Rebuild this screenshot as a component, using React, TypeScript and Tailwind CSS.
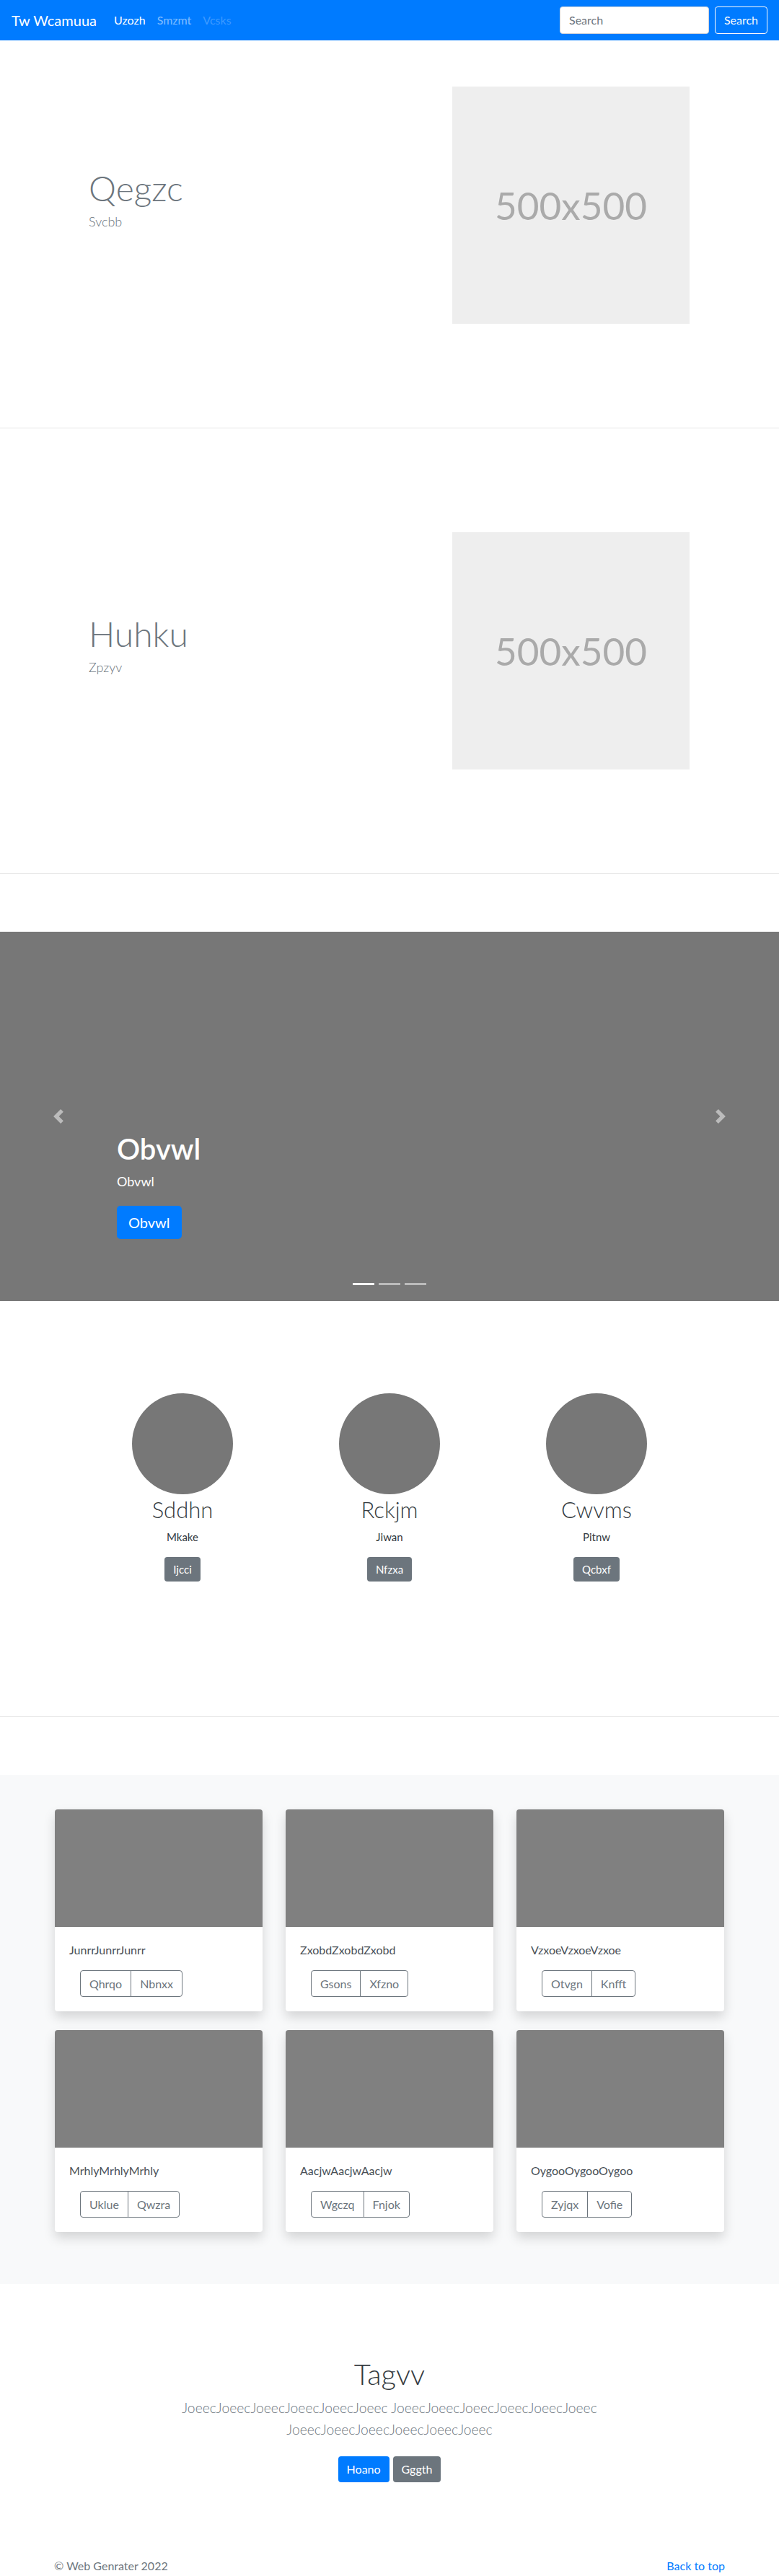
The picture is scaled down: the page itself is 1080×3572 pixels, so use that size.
import React from "react";

const feature = [
  { title: "Qegzc", sub: "Svcbb" },
  { title: "Huhku", sub: "Zpzyv" },
];

const people = [
  { name: "Sddhn", role: "Mkake", btn: "Ijcci" },
  { name: "Rckjm", role: "Jiwan", btn: "Nfzxa" },
  { name: "Cwvms", role: "Pitnw", btn: "Qcbxf" },
];

const cards = [
  { text: "JunrrJunrrJunrr", a: "Qhrqo", b: "Nbnxx" },
  { text: "ZxobdZxobdZxobd", a: "Gsons", b: "Xfzno" },
  { text: "VzxoeVzxoeVzxoe", a: "Otvgn", b: "Knfft" },
  { text: "MrhlyMrhlyMrhly", a: "Uklue", b: "Qwzra" },
  { text: "AacjwAacjwAacjw", a: "Wgczq", b: "Fnjok" },
  { text: "OygooOygooOygoo", a: "Zyjqx", b: "Vofie" },
];

function Feature({ title, sub, top }: { title: string; sub: string; top: boolean }) {
  return (
    <>
      <section className={top ? "pt-16 pb-36" : "pt-36 pb-36"}>
        <div className="mx-auto flex w-[930px]">
          <div className="w-[480px] pl-[48px] pt-[112px]">
            <h1 className="text-[48px] font-light leading-[1.2] text-[#6c757d]">{title}</h1>
            <p className="mt-1 text-[18px] font-light leading-[27px] text-[#6c757d]">{sub}</p>
          </div>
          <div className="pl-[72px]">
            <div className="flex h-[329px] w-[329px] items-center justify-center bg-[#eeeeee] text-[53px] text-[#aaaaaa]">
              500x500
            </div>
          </div>
        </div>
      </section>
      <hr className="border-0 border-t border-[#e5e5e5]" />
    </>
  );
}

export default function App() {
  return (
    <div className="min-h-screen bg-white font-['Lato','Liberation_Sans',sans-serif] text-[16px] text-[#212529]">
      {/* Navbar */}
      <nav className="flex h-14 items-center bg-[#007bff] px-4">
        <a className="mr-4 text-[20px] leading-[30px] text-white">Tw Wcamuua</a>
        <ul className="flex">
          <li className="px-2 text-white">Uzozh</li>
          <li className="px-2 text-white/50">Smzmt</li>
          <li className="px-2 text-white/25">Vcsks</li>
        </ul>
        <div className="ml-auto flex gap-2">
          <div className="flex h-[38px] w-[207px] items-center rounded border border-[#ced4da] bg-white px-3 text-[#6c757d]">
            Search
          </div>
          <button className="h-[38px] w-[73px] rounded border border-[#f8f9fa] text-[#f8f9fa]">Search</button>
        </div>
      </nav>

      <Feature title={feature[0].title} sub={feature[0].sub} top={true} />
      <Feature title={feature[1].title} sub={feature[1].sub} top={false} />

      {/* Carousel */}
      <div className="relative mt-20 flex h-[512px] flex-col justify-end bg-[#777777] pb-[86px] pl-[15%]">
        <h1 className="text-[40px] font-semibold leading-[1.2] text-white">Obvwl</h1>
        <p className="mt-2 text-[18px] leading-[27px] text-white">Obvwl</p>
        <div className="mt-5">
          <a className="inline-block rounded-[5px] bg-[#007bff] px-4 py-2 text-[20px] leading-[30px] text-white">Obvwl</a>
        </div>
        <div className="absolute top-0 bottom-0 left-0 flex w-[15%] items-center justify-center opacity-50">
          <svg width="20" height="20" viewBox="0 0 8 8" fill="#fff">
            <path d="M5.25 0l-4 4 4 4 1.5-1.5-2.5-2.5 2.5-2.5-1.5-1.5z" />
          </svg>
        </div>
        <div className="absolute top-0 right-0 bottom-0 flex w-[15%] items-center justify-center opacity-50">
          <svg width="20" height="20" viewBox="0 0 8 8" fill="#fff">
            <path d="M2.75 0l-1.5 1.5 2.5 2.5-2.5 2.5 1.5 1.5 4-4-4-4z" />
          </svg>
        </div>
        <div className="absolute bottom-[22px] left-1/2 flex -translate-x-1/2 gap-[6px]">
          <span className="h-[3px] w-[30px] bg-white" />
          <span className="h-[3px] w-[30px] bg-white/50" />
          <span className="h-[3px] w-[30px] bg-white/50" />
        </div>
      </div>

      {/* Marketing circles */}
      <div className="mx-auto mt-32 grid w-[861px] grid-cols-3">
        {people.map((p) => (
          <div key={p.name} className="flex flex-col items-center text-center">
            <div className="h-[140px] w-[140px] rounded-full bg-[#777777]" />
            <h2 className="mt-[3px] text-[31px] font-light leading-[1.2] text-[#343a40]">{p.name}</h2>
            <p className="mt-2 text-[15px] leading-[22.5px] text-[#343a40]">{p.role}</p>
            <button className="mt-4 rounded bg-[#6c757d] px-3 py-[6px] text-[15px] leading-[22.5px] text-white">
              {p.btn}
            </button>
          </div>
        ))}
      </div>

      <hr className="mt-[187px] border-0 border-t border-[#e5e5e5]" />

      {/* Album */}
      <section className="mt-20 bg-[#f8f9fa] pt-12 pb-[72px]">
        <div className="mx-auto grid w-[928px] grid-cols-3 gap-x-8 gap-y-[26px]">
          {cards.map((c) => (
            <div key={c.text} className="overflow-hidden rounded bg-white shadow-[0_0.5rem_1rem_rgba(0,0,0,0.15)]">
              <div className="h-[163px] bg-[#808080]" />
              <div className="p-5">
                <p className="text-[16px] leading-6 text-[#495057]">{c.text}</p>
                <div className="mt-4 ml-[15px] inline-flex">
                  <button className="rounded-l border border-[#6c757d] px-3 py-[6px] text-[16px] leading-[23px] text-[#6c757d]">
                    {c.a}
                  </button>
                  <button className="-ml-px rounded-r border border-[#6c757d] px-3 py-[6px] text-[16px] leading-[23px] text-[#6c757d]">
                    {c.b}
                  </button>
                </div>
              </div>
            </div>
          ))}
        </div>
      </section>

      {/* Jumbotron */}
      <section className="pt-[101px] text-center">
        <div className="mx-auto max-w-[640px]">
          <h1 className="text-[40px] font-light leading-[1.2] text-[#343a40]">Tagvv</h1>
          <p className="mt-2 text-[19.3px] font-light leading-[30px] text-[#6c757d]">
            JoeecJoeecJoeecJoeecJoeecJoeec JoeecJoeecJoeecJoeecJoeecJoeec JoeecJoeecJoeecJoeecJoeecJoeec
          </p>
          <div className="mt-[22px] flex justify-center gap-[5px]">
            <a className="rounded bg-[#007bff] px-3 py-[6px] text-[16px] leading-6 text-white">Hoano</a>
            <a className="rounded bg-[#6c757d] px-3 py-[6px] text-[16px] leading-6 text-white">Gggth</a>
          </div>
        </div>
      </section>

      {/* Footer */}
      <footer className="mx-auto mt-[104px] flex w-[930px] justify-between pb-12 text-[16px] leading-6">
        <p className="text-[#6c757d]">© Web Genrater 2022</p>
        <a className="text-[#007bff]">Back to top</a>
      </footer>
    </div>
  );
}
